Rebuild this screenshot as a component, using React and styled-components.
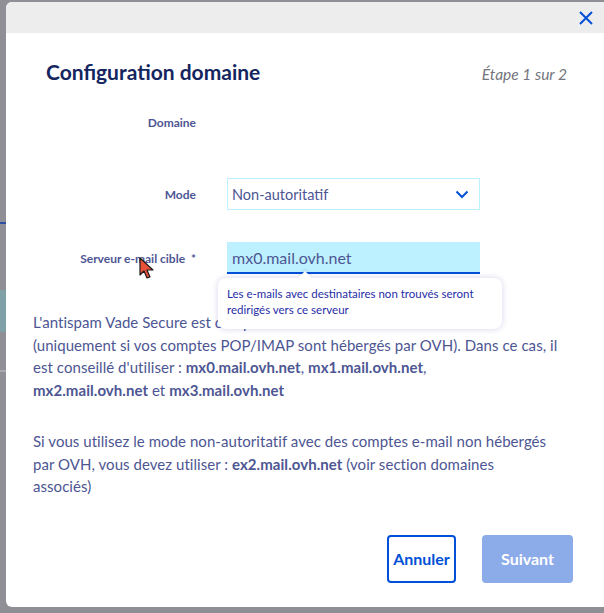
import React from "react";
import styled, { createGlobalStyle } from "styled-components";

const GlobalStyle = createGlobalStyle`
  html, body { margin: 0; padding: 0; }
  body {
    background: #8f8f95;
    font-family: "Lato", "Liberation Sans", sans-serif;
  }
  * { box-sizing: border-box; }
`;

const Backdrop = styled.div`
  position: relative;
  width: 604px;
  height: 613px;
  overflow: hidden;
  display: flex;
  padding-top: 2px;
  background: #8f8f95;
`;

const Strip = styled.div`
  width: 6px;
  flex: none;
  display: flex;
  flex-direction: column;
`;

const StripGap = styled.div`
  height: ${(p) => p.$h}px;
  flex: none;
`;

const StripLine = styled.div`
  height: 2px;
  background: ${(p) => p.$c};
  flex: none;
`;

const StripBlock = styled.div`
  height: 42px;
  background: #7fa0a6;
  flex: none;
`;

const Modal = styled.div`
  width: 598px;
  height: 605px;
  flex: none;
  background: #fff;
  border-radius: 6px 0 0 6px;
  display: flex;
  flex-direction: column;
  overflow: hidden;
`;

const Header = styled.div`
  height: 31px;
  background: #ecedec;
  display: flex;
  justify-content: flex-end;
  align-items: center;
  padding-right: 10px;
  flex: none;
`;

const CloseBtn = styled.button`
  border: 0;
  background: transparent;
  padding: 0;
  width: 16px;
  height: 16px;
  display: flex;
  cursor: pointer;
`;

const Body = styled.div`
  padding: 0 31px 0 21px;
  display: flex;
  flex-direction: column;
`;

const TitleRow = styled.div`
  display: flex;
  justify-content: space-between;
  align-items: baseline;
  margin-top: 26px;
  padding-left: 19px;
  padding-right: 6px;
`;

const Title = styled.h2`
  margin: 0;
  font-size: 21px;
  font-weight: 700;
  color: #15265f;
`;

const Step = styled.span`
  font-size: 15.5px;
  font-style: italic;
  color: #74757d;
`;

const Form = styled.div`
  display: grid;
  grid-template-columns: 163px 253px;
  column-gap: 31px;
  padding-left: 6px;
`;

const Label = styled.label`
  justify-self: end;
  align-self: center;
  font-size: 12px;
  font-weight: 700;
  color: #4d5693;
  margin-top: ${(p) => p.$mt || 0}px;
  white-space: nowrap;
`;

const Empty = styled.div`
  height: 32px;
  margin-top: ${(p) => p.$mt || 0}px;
`;

const Select = styled.div`
  height: 32px;
  border: 1px solid #bef1ff;
  display: flex;
  align-items: center;
  justify-content: space-between;
  padding: 0 10px 0 4px;
  font-size: 14.5px;
  color: #4d5693;
  margin-top: ${(p) => p.$mt || 0}px;
`;

const FieldWrap = styled.div`
  position: relative;
  margin-top: ${(p) => p.$mt || 0}px;
`;

const Input = styled.div`
  height: 32px;
  background: #bef1ff;
  border-bottom: 2px solid #0050d7;
  display: flex;
  align-items: center;
  padding: 1px 5px 0;
  font-size: 16px;
  color: #4d5693;
`;

const Tooltip = styled.div`
  position: absolute;
  top: 36px;
  left: -9px;
  width: 284px;
  background: #fff;
  border-radius: 8px;
  box-shadow: 0 0 6px rgba(0, 14, 156, 0.18);
  padding: 8px 9px 11px;
  font-size: 11.5px;
  line-height: 16px;
  color: #1f2da6;
  z-index: 2;
  white-space: nowrap;

  &::before {
    content: "";
    position: absolute;
    top: -5px;
    left: 82px;
    width: 10px;
    height: 10px;
    background: #fff;
    transform: rotate(45deg);
    box-shadow: -2px -2px 3px rgba(0, 14, 156, 0.08);
  }
`;

const Para = styled.p`
  margin: ${(p) => p.$mt}px 0 0;
  padding-left: 6px;
  font-size: 15px;
  line-height: 22.7px;
  color: #4d5693;
  letter-spacing: 0.05px;
  white-space: nowrap;

  b {
    font-weight: 700;
  }
`;

const Footer = styled.div`
  display: flex;
  justify-content: flex-end;
  gap: 26px;
  margin-top: 37px;
`;

const Button = styled.button`
  height: 48px;
  width: ${(p) => p.$w}px;
  border-radius: 4px;
  font-family: inherit;
  font-size: 16px;
  font-weight: 700;
  padding: 0;
  border: 2px solid ${(p) => (p.$primary ? "#8cabe9" : "#0050d7")};
  background: ${(p) => (p.$primary ? "#8cabe9" : "#fff")};
  color: ${(p) => (p.$primary ? "#fff" : "#0050d7")};
`;

const Cursor = styled.svg`
  position: absolute;
  left: 139px;
  top: 257px;
  z-index: 5;
`;

export default function App() {
  return (
    <>
      <GlobalStyle />
      <Backdrop>
        <Strip>
          <StripGap $h={220} />
          <StripLine $c="#2c4ea3" />
          <StripGap $h={66} />
          <StripBlock />
          <StripGap $h={38} />
          <StripLine $c="#a8abb4" />
        </Strip>
        <Modal>
          <Header>
            <CloseBtn aria-label="Fermer">
              <svg width="16" height="16" viewBox="0 0 16 16">
                <path d="M2 2 L14 14 M14 2 L2 14" stroke="#0050d7" strokeWidth="2" fill="none" />
              </svg>
            </CloseBtn>
          </Header>
          <Body>
            <TitleRow>
              <Title>Configuration domaine</Title>
              <Step>Étape 1 sur 2</Step>
            </TitleRow>
            <Form>
              <Label $mt={22}>Domaine</Label>
              <Empty $mt={22} />
              <Label $mt={40}>Mode</Label>
              <Select $mt={40}>
                <span>Non-autoritatif</span>
                <svg width="14" height="9" viewBox="0 0 14 9">
                  <path d="M1.5 1.5 L7 7 L12.5 1.5" stroke="#0050d7" strokeWidth="2" fill="none" />
                </svg>
              </Select>
              <Label $mt={32}>Serveur e-mail cible&nbsp;&nbsp;*</Label>
              <FieldWrap $mt={32}>
                <Input>mx0.mail.ovh.net</Input>
                <Tooltip>
                  Les e-mails avec destinataires non trouvés seront
                  <br />
                  redirigés vers ce serveur
                </Tooltip>
              </FieldWrap>
            </Form>
            <Para $mt={37}>
              L'antispam Vade Secure est compatible avec le mode non-autoritatif
              <br />
              (uniquement si vos comptes POP/IMAP sont hébergés par OVH). Dans ce cas, il
              <br />
              est conseillé d'utiliser : <b>mx0.mail.ovh.net</b>, <b>mx1.mail.ovh.net</b>,
              <br />
              <b>mx2.mail.ovh.net</b> et <b>mx3.mail.ovh.net</b>
            </Para>
            <Para $mt={28}>
              Si vous utilisez le mode non-autoritatif avec des comptes e-mail non hébergés
              <br />
              par OVH, vous devez utiliser : <b>ex2.mail.ovh.net</b> (voir section domaines
              <br />
              associés)
            </Para>
            <Footer>
              <Button $w={69}>Annuler</Button>
              <Button $w={91} $primary disabled>
                Suivant
              </Button>
            </Footer>
          </Body>
        </Modal>
        <Cursor width="18" height="24" viewBox="0 0 18 24">
          <path d="M1 1 L1 18 L5 14 L8 21 L11 20 L8 13 L14 13 Z" fill="#e8503a" stroke="#1b1b1b" strokeWidth="1.2" strokeLinejoin="round" />
        </Cursor>
      </Backdrop>
    </>
  );
}
